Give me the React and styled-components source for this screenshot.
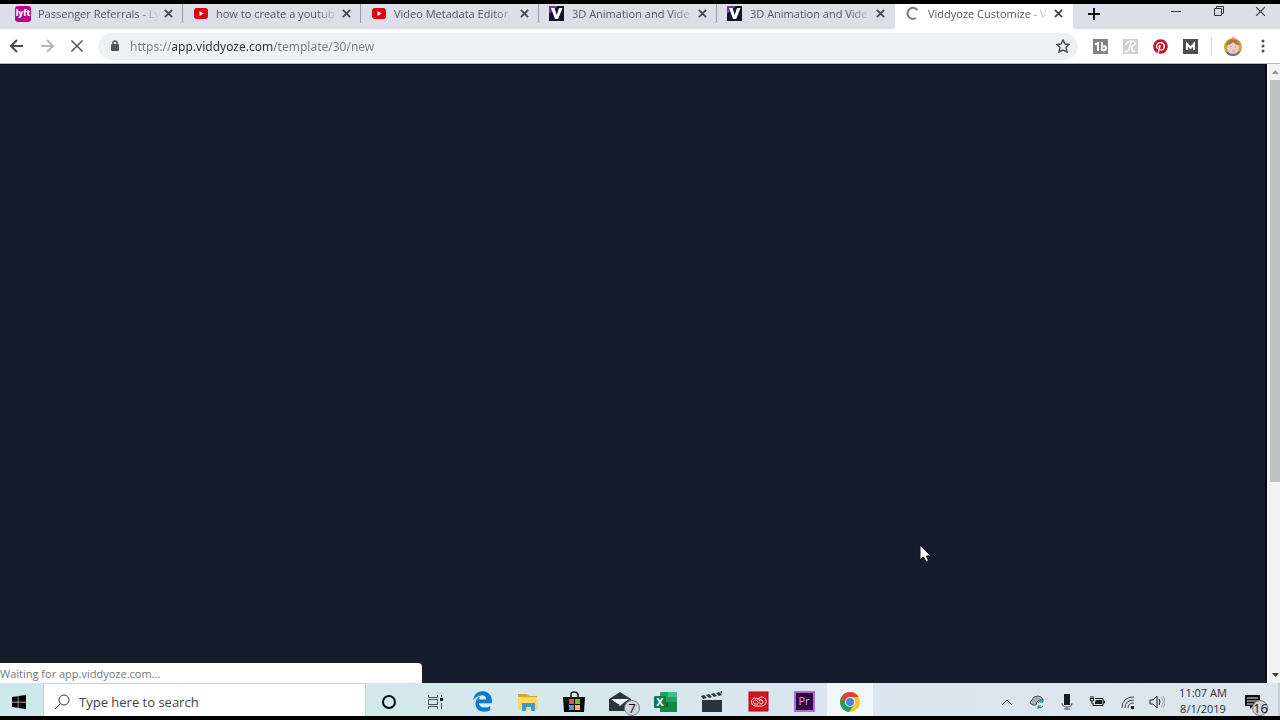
import styled, { createGlobalStyle, css } from "styled-components";
import { FaWindows, FaPinterest, FaEdgeLegacy } from "react-icons/fa6";

const GlobalStyle = createGlobalStyle`
    * {
        box-sizing: border-box;
    }
    body {
        margin: 0;
        font-family: "Open Sans", "Noto Sans", sans-serif;
        font-size: 11px;
    }
    button, input {
        font-family: inherit;
        border: none;
        background: transparent;
        padding: 0;
        outline: none;
    }
    svg {
        display: block;
        flex: none;
    }
`

const Screen = styled.div`
    display: flex;
    flex-direction: column;
    height: 100vh;
    padding: 4px 0;
    background-color: #000;
    overflow: hidden;
`

const TabStrip = styled.header`
    display: flex;
    height: 25px;
    padding-left: 5px;
    background-color: #dcdfe7;
`

const TabList = styled.nav`
    display: flex;
    flex: 0 1 1068px;
    min-width: 0;
`

const Tab = styled.div`
    display: flex;
    flex: 1 1 0;
    min-width: 0;
    align-items: flex-start;
    padding: 2px 9px 0 10px;
    background: linear-gradient(#9a9da5, #9a9da5) right top / 1px 19px no-repeat;
    ${props => props.$last && css`
        background: none;
    `}
    ${props => props.$active && css`
        background: #fff;
    `}
`

const TabLink = styled.a`
    display: flex;
    flex: 1;
    min-width: 0;
    gap: 7px;
    color: #54575d;
    text-decoration: none;
`

const TabTitle = styled.span`
    flex: 1;
    min-width: 0;
    overflow: hidden;
    white-space: nowrap;
    line-height: 15px;
    mask-image: linear-gradient(90deg, #000 calc(100% - 22px), transparent);
`

const TabClose = styled.button`
    display: flex;
    align-items: center;
    justify-content: center;
    width: 12px;
    height: 15px;
    margin-left: 2px;
    color: #45484d;
`

const NewTab = styled.button`
    display: flex;
    align-items: center;
    justify-content: center;
    width: 42px;
    height: 19px;
    color: #111;
`

const WindowControls = styled.div`
    display: flex;
    margin-left: auto;
`

const WindowButton = styled.button`
    display: flex;
    align-items: center;
    justify-content: center;
    width: 43px;
    height: 14px;
    color: #33363b;
    &:last-child {
        width: 40px;
    }
`

const Toolbar = styled.div`
    display: flex;
    align-items: center;
    height: 35px;
    padding: 0 2px;
    background-color: #fff;
    border-bottom: 1px solid #b6b8bb;
`

const ToolButton = styled.button`
    display: flex;
    align-items: center;
    justify-content: center;
    width: 30px;
    height: 28px;
    color: ${props => props.$muted ? "#b5b7ba" : "#4b4e52"};
`

const AddressBar = styled.form`
    display: flex;
    flex: 1;
    align-items: center;
    height: 27px;
    margin: 0 7px 0 6px;
    padding-left: 12px;
    border-radius: 14px;
    background-color: #eef1f3;
`

/* scheme and path are grey, the host between them is dark */
const AddressInput = styled.input`
    flex: 1;
    min-width: 0;
    height: 22px;
    margin-left: 10px;
    font-family: "Noto Sans", sans-serif;
    font-size: 12px;
    color: transparent;
    background-image: linear-gradient(90deg, #7b7f83 42px, #2d3033 42px, #2d3033 143px, #7b7f83 143px);
    background-clip: text;
    -webkit-background-clip: text;
`

const Divider = styled.span`
    width: 1px;
    height: 18px;
    margin: 0 6px 0 6px;
    background-color: #d4d6d9;
`

const Extensions = styled.div`
    display: flex;
    align-items: center;
`

const Viewport = styled.main`
    position: relative;
    display: flex;
    flex: 1;
    min-height: 0;
`

const PageArea = styled.section`
    flex: 1;
    background-color: #151c2b;
    border-top: 1px solid #0c101b;
    border-right: 2px solid #070a12;
`

const Scrollbar = styled.div`
    display: flex;
    flex-direction: column;
    align-items: center;
    width: 13px;
    padding-left: 2px;
    background-color: #f3f3f4;
    border-left: 1px solid #fff;
`

const ScrollArrow = styled.button`
    display: flex;
    align-items: center;
    justify-content: center;
    width: 100%;
    height: 16px;
    color: ${props => props.$muted ? "#96989b" : "#3b3d40"};
`

const ScrollTrack = styled.div`
    flex: 1;
    width: 100%;
`

const ScrollThumb = styled.div`
    height: 68.5%;
    background-color: #c0c1c2;
`

const StatusBubble = styled.output`
    position: absolute;
    left: 0;
    bottom: 0;
    width: 33%;
    height: 20px;
    border-radius: 0 4px 0 0;
    background-color: #fff;
    color: #75787b;
    line-height: 21px;
`

const Pointer = styled.svg`
    position: absolute;
    left: 919px;
    top: 480px;
`

const Taskbar = styled.footer`
    display: flex;
    height: 33px;
    background: linear-gradient(90deg, #cde8ea, #d5e8eb 40%, #dae5ef 65%, #dce6ec);
`

const StartButton = styled.button`
    display: flex;
    align-items: center;
    justify-content: center;
    width: 43px;
    padding: 4px 5px 0 0;
    color: #000;
`

const SearchBox = styled.label`
    display: flex;
    align-items: center;
    gap: 9px;
    width: 323px;
    padding: 4px 10px 0;
    background-color: #fff;
    border: 1px solid #c3d3d6;
    border-bottom: none;
    color: #34373a;
`

const SearchInput = styled.input`
    flex: 1;
    min-width: 0;
    font-size: 13px;
    line-height: 20px;
    &::placeholder {
        color: #3f4346;
        opacity: 1;
    }
`

const ButtonGroup = styled.div`
    display: flex;
    margin-right: 1px;
`

const TaskButton = styled.button`
    position: relative;
    display: flex;
    align-items: center;
    justify-content: center;
    width: 46px;
    padding-top: 4px;
    color: #15191c;
    background-color: ${props => props.$active ? "#f1f7fb" : "transparent"};
`

const Tray = styled.div`
    display: flex;
    margin-left: auto;
    padding-right: 7px;
    border-right: 2px solid #c5ced6;
`

const TrayButton = styled.button`
    position: relative;
    display: flex;
    align-items: center;
    justify-content: center;
    width: ${props => props.$wide ? "37px" : "30px"};
    padding-top: 4px;
    color: #181b1e;
`

const Clock = styled.time`
    display: flex;
    flex-direction: column;
    width: 62px;
    padding-top: 2px;
    text-align: center;
    white-space: nowrap;
    line-height: 16px;
    color: #2c3034;
`

const Badge = styled.span`
    position: absolute;
    right: 3px;
    bottom: 0;
    width: 16px;
    height: 16px;
    border: 1px solid #777b7f;
    border-radius: 50%;
    background-color: #cfd5da;
    color: #101214;
    text-align: center;
    line-height: 14px;
`

function LyftIcon() {
    return (
        <svg width="16" height="16" viewBox="0 0 16 16">
            <rect width="16" height="16" rx="3" fill="#b3078e" />
            <text x="8" y="10" textAnchor="middle" fontSize="8" fontWeight="800" fill="#fff">lyft</text>
        </svg>
    )
}

function YoutubeIcon() {
    return (
        <svg width="16" height="16" viewBox="0 0 16 16">
            <rect x="1" y="2" width="14" height="11" rx="3" fill="#dc0510" />
            <path d="M6.500 5v5l4-2.500z" fill="#fff" />
        </svg>
    )
}

function ViddyozeIcon() {
    return (
        <svg width="16" height="16" viewBox="0 0 16 16">
            <rect width="15" height="15" fill="#14142b" />
            <path d="M0 0h9L0 8z" fill="#6d3f94" />
            <path d="M2 2h3.500l2.200 7 2.300-7h3.500L9.200 13H6z" fill="#fff" />
        </svg>
    )
}

function SpinnerIcon() {
    return (
        <svg width="16" height="16" viewBox="0 0 16 16">
            <path d="M12.500 4.200A5.500 5.500 0 1 0 11 12" fill="none" stroke="#777c85" strokeWidth="2" />
        </svg>
    )
}

function CrossIcon({ size = 9, width = 2 }) {
    return (
        <svg width={size} height={size} viewBox="0 0 10 10">
            <path d="M1 1l8 8M9 1l-8 8" stroke="currentColor" strokeWidth={width} />
        </svg>
    )
}

function ArrowIcon({ flip }) {
    return (
        <svg width="16" height="16" viewBox="0 0 16 16" fill="none" stroke="currentColor" strokeWidth="2">
            <path d={flip ? "M2 8h11M8 2l6 6-6 6" : "M14 8H3M8 2L2 8l6 6"} />
        </svg>
    )
}

function CortanaIcon() {
    return (
        <svg width="18" height="18" viewBox="0 0 18 18">
            <circle cx="9" cy="9" r="6" fill="none" stroke="#080b0d" strokeWidth="2" />
        </svg>
    )
}

function TaskViewIcon() {
    return (
        <svg width="18" height="18" viewBox="0 0 18 18" fill="none" stroke="#4a5256">
            <path d="M2.500 2v2.500h9V2M2.500 16v-2.500h9V16M2.500 6.500h9v5h-9zM15.500 2v2M15.500 10v6" />
            <path d="M14 5h3v3h-3z" fill="#15191c" stroke="none" />
        </svg>
    )
}

function FolderIcon() {
    return (
        <svg width="22" height="20" viewBox="0 0 22 20">
            <path d="M1 2h9l2 2h8v4H1z" fill="#d9a520" />
            <path d="M1 5h19v3h1v10H1z" fill="#fbd668" />
            <path d="M5 19v-8h13v8h-4v-4H9v4z" fill="#3d9acb" />
        </svg>
    )
}

function StoreIcon() {
    return (
        <svg width="22" height="22" viewBox="0 0 22 22">
            <path d="M8 6V3q0-2 3-2t4 2v3" fill="none" stroke="#171717" strokeWidth="1.500" />
            <path d="M0 6h22l-1 15H1z" fill="#080808" />
            <path d="M6 8h5v5H6z" fill="#ee5335" />
            <path d="M12 8h5v5h-5z" fill="#80b733" />
            <path d="M6 14h5v5H6z" fill="#30a6e1" />
            <path d="M12 14h5v5h-5z" fill="#f8bd26" />
        </svg>
    )
}

function MailIcon() {
    return (
        <svg width="24" height="20" viewBox="0 0 24 20">
            <path d="M1 7L12 0l11 7v12H1z" fill="#2d363d" />
            <path d="M3 7h18l-7 5-2 2z" fill="#eef3f6" />
            <path d="M1 7l11 6-5 1z" fill="#2d363d" />
        </svg>
    )
}

function ExcelIcon() {
    return (
        <svg width="24" height="22" viewBox="0 0 24 22">
            <rect x="6" y="1" width="17" height="20" rx="1" fill="#20a366" />
            <path d="M14 1h9v5h-9z" fill="#36c482" />
            <path d="M6 11h8v5H6z" fill="#185c37" />
            <path d="M14 11h9v10H6v-5h8z" fill="#178449" />
            <rect x="0" y="5" width="12" height="12" rx="1" fill="#107c41" />
            <text x="6" y="15" textAnchor="middle" fontSize="11" fontWeight="700" fill="#fff">X</text>
        </svg>
    )
}

function MoviesIcon() {
    return (
        <svg width="24" height="22" viewBox="0 0 24 22" fill="#2b3439">
            <path d="M2 9h20v12H2z" />
            <path d="M1 5l3-1 3 3-4 1zM6 4l3-1 3 3-3 1zM11 3l3-1 3 3-3 1zM16 2l3-1 3 3-3 1zM20 1l2-1v3z" />
        </svg>
    )
}

function CreativeCloudIcon() {
    return (
        <svg width="21" height="21" viewBox="0 0 21 21">
            <rect x="1" y="1" width="19" height="19" fill="#d5111c" stroke="#a90d17" />
            <g fill="none" stroke="#ffe4e2">
                <path d="M7 15h7a4.500 4.500 0 1 0-4-7 4 4 0 1 0-3 7z" />
                <path d="M10 13H7a2 2 0 1 1 2-3l4 3a2 2 0 1 0 0-4q-1 0-2 1" />
                <path d="M9 8q2-1 4 1" />
            </g>
        </svg>
    )
}

function PremiereIcon() {
    return (
        <svg width="21" height="21" viewBox="0 0 21 21">
            <rect x="1" y="1" width="19" height="19" fill="#2d0a3a" stroke="#b268d4" strokeWidth="2" />
            <text x="10" y="14" textAnchor="middle" fontSize="11" fill="#dd9cf4">Pr</text>
        </svg>
    )
}

function ChromeIcon() {
    return (
        <svg width="22" height="22" viewBox="0 0 22 22">
            <circle cx="11" cy="11" r="10" fill="#fbc52c" />
            <path d="M2.300 6A10 10 0 0 0 10 21l5.300-7.500L11 11 6.700 13.500z" fill="#1ca05c" />
            <path d="M11 6h8.700A10 10 0 0 0 2.300 6l4.400 7.500z" fill="#dc4437" />
            <circle cx="11" cy="11" r="5" fill="#f4f4f4" />
            <circle cx="11" cy="11" r="4" fill="#4a86ea" />
        </svg>
    )
}

function TubeBuddyIcon() {
    return (
        <svg width="15" height="15" viewBox="0 0 15 15">
            <rect width="15" height="15" fill="#858585" />
            <path d="M5 3v9M2 5h4M9 3v9M9 8q4-2 4 1t-4 2" fill="none" stroke="#fff" strokeWidth="2" />
        </svg>
    )
}

function ScriptIcon() {
    return (
        <svg width="15" height="15" viewBox="0 0 15 15">
            <rect width="15" height="15" fill="#d0d0d0" />
            <path d="M3 6Q3 3 8 2q5 0 4 3-2 3-5 2 3 1 2 4 0 2 3 1M8 3L5 12q-1 1-3 0" fill="none" stroke="#fff" strokeWidth="1.500" />
        </svg>
    )
}

function MomentumIcon() {
    return (
        <svg width="15" height="15" viewBox="0 0 15 15">
            <rect width="15" height="15" fill="#4c5052" />
            <path d="M4 11V5l3.500 4L11 5v6" fill="none" stroke="#fff" strokeWidth="2" />
        </svg>
    )
}

function AvatarIcon() {
    return (
        <svg width="20" height="20" viewBox="0 0 20 20">
            <circle cx="10" cy="11" r="9" fill="#cda447" />
            <path d="M2 15q8 3 16 0-3 5-8 5t-8-5z" fill="#86609c" />
            <ellipse cx="10" cy="12" rx="6" ry="6" fill="#f2c9bd" />
            <path d="M3 9q2-7 8-6 5 1 6 6-5 0-7-3-2 3-7 3z" fill="#a97a38" />
            <path d="M8 3l3-3 1 4z" fill="#dd8d9b" />
            <path d="M7 11h1M12 11h1M9 15h3" stroke="#c99083" fill="none" />
        </svg>
    )
}

const tabs = [
    { title: "Passenger Referrals - Ly", icon: <LyftIcon /> },
    { title: "how to create a youtub", icon: <YoutubeIcon /> },
    { title: "Video Metadata Editor", icon: <YoutubeIcon /> },
    { title: "3D Animation and Vide", icon: <ViddyozeIcon /> },
    { title: "3D Animation and Vide", icon: <ViddyozeIcon />, last: true },
    { title: "Viddyoze Customize - V", icon: <SpinnerIcon />, active: true },
]

const apps = [
    { name: "Edge", icon: <FaEdgeLegacy size={21} color="#087bcc" /> },
    { name: "File Explorer", icon: <FolderIcon /> },
    { name: "Store", icon: <StoreIcon /> },
    { name: "Mail", icon: <MailIcon />, badge: 7 },
    { name: "Excel", icon: <ExcelIcon /> },
    { name: "Movies & TV", icon: <MoviesIcon /> },
    { name: "Creative Cloud", icon: <CreativeCloudIcon /> },
    { name: "Premiere Pro", icon: <PremiereIcon /> },
    { name: "Chrome", icon: <ChromeIcon />, active: true },
]

const trayIcons = [
    { name: "Show hidden icons", icon: <path d="M3 11l5-5 5 5" /> },
    {
        name: "OneDrive",
        icon: <>
            <path d="M4 11q-5-2-1-5 1-4 6-4 4 0 5 4-6-1-7 5z" fill="#a9aeae" stroke="#4b5254" />
            <path d="M9 9q2-4 5-1M14 5v3h-3M14 12q-2 3-5 1M9 15v-3h3" stroke="#087e96" />
        </>
    },
    {
        name: "Microphone",
        icon: <>
            <rect x="5" y="0" width="6" height="11" fill="currentColor" stroke="none" />
            <path d="M3 9q0 4 5 4t5-4M8 13v3M5 15h6" stroke="#5a6064" />
        </>
    },
    {
        name: "Battery",
        icon: <>
            <path d="M6 4.500h8v7H4V9M14 7h1.500v2H14" />
            <path d="M7 6h6v4H6V8z" fill="currentColor" stroke="none" />
            <path d="M1 4.500h4M1.500 5v2h3V5M2 2v2M4 2v2M3 7v3" />
        </>
    },
    {
        name: "Network",
        icon: <>
            <path d="M3 14Q3 3 15 3M6 14q0-8 9-8M9 14q0-5 6-5" stroke="#3c4246" />
            <path d="M12 12h3v3h-3z" fill="currentColor" stroke="none" />
        </>
    },
    {
        name: "Volume",
        icon: <>
            <path d="M1 6h3l4-4v12l-4-4H1z" />
            <path d="M10 5q2 3 0 6" />
            <path d="M12 3q4 5 0 10M14 2q4 6 0 12" stroke="#9ba2a7" />
        </>
    },
]

export default function App() {
    return (
        <Screen>
            <GlobalStyle />
            <TabStrip>
                <TabList>
                    {tabs.map((tab, i) => (
                        <Tab key={i} $active={tab.active} $last={tab.last}>
                            <TabLink href="#">
                                {tab.icon}
                                <TabTitle>{tab.title}</TabTitle>
                            </TabLink>
                            <TabClose aria-label="Close tab"><CrossIcon /></TabClose>
                        </Tab>
                    ))}
                </TabList>
                <NewTab aria-label="New tab">
                    <svg width="12" height="12" viewBox="0 0 12 12">
                        <path d="M6 0v12M0 6h12" stroke="currentColor" strokeWidth="2" />
                    </svg>
                </NewTab>
                <WindowControls>
                    <WindowButton aria-label="Minimize">
                        <svg width="10" height="10" viewBox="0 0 10 10"><path d="M0 5.500h10" stroke="currentColor" /></svg>
                    </WindowButton>
                    <WindowButton aria-label="Restore">
                        <svg width="10" height="10" viewBox="0 0 10 10" fill="none" stroke="currentColor">
                            <path d="M.5 2.500h7v7h-7zM2.500 2V.5h7v7H8" />
                        </svg>
                    </WindowButton>
                    <WindowButton aria-label="Close"><CrossIcon size={11} width={1} /></WindowButton>
                </WindowControls>
            </TabStrip>

            <Toolbar>
                <ToolButton aria-label="Back"><ArrowIcon /></ToolButton>
                <ToolButton aria-label="Forward" $muted><ArrowIcon flip /></ToolButton>
                <ToolButton aria-label="Stop"><CrossIcon size={14} width={1} /></ToolButton>
                <AddressBar>
                    <svg width="10" height="12" viewBox="0 0 10 12">
                        <rect x="1" y="4" width="8" height="7" rx="1" fill="#505459" />
                        <path d="M3 5V3a2 2 0 0 1 4 0v2" fill="none" stroke="#505459" strokeWidth="1.500" />
                    </svg>
                    <AddressInput aria-label="Address" defaultValue="https://app.viddyoze.com/template/30/new" />
                    <ToolButton type="button" aria-label="Bookmark">
                        <svg width="14" height="14" viewBox="0 0 14 14">
                            <path d="M7 1l2 4 4 .5-3 3 1 4.500-4-2-4 2 1-4.500-3-3L5 5z" fill="none" stroke="currentColor" strokeWidth="1.500" />
                        </svg>
                    </ToolButton>
                </AddressBar>
                <Extensions>
                    <ToolButton aria-label="TubeBuddy"><TubeBuddyIcon /></ToolButton>
                    <ToolButton aria-label="Rebrandly"><ScriptIcon /></ToolButton>
                    <ToolButton aria-label="Pinterest"><FaPinterest size={15} color="#c70e27" /></ToolButton>
                    <ToolButton aria-label="Momentum"><MomentumIcon /></ToolButton>
                    <Divider />
                    <ToolButton aria-label="Profile"><AvatarIcon /></ToolButton>
                    <ToolButton aria-label="Menu">
                        <svg width="4" height="14" viewBox="0 0 4 14" fill="currentColor">
                            <circle cx="2" cy="2" r="1.500" />
                            <circle cx="2" cy="7" r="1.500" />
                            <circle cx="2" cy="12" r="1.500" />
                        </svg>
                    </ToolButton>
                </Extensions>
            </Toolbar>

            <Viewport>
                <PageArea />
                <Scrollbar>
                    <ScrollArrow aria-label="Scroll up" $muted>
                        <svg width="7" height="4" viewBox="0 0 7 4"><path d="M0 4l3.500-4L7 4z" fill="currentColor" /></svg>
                    </ScrollArrow>
                    <ScrollTrack><ScrollThumb /></ScrollTrack>
                    <ScrollArrow aria-label="Scroll down">
                        <svg width="7" height="4" viewBox="0 0 7 4"><path d="M0 0l3.500 4L7 0z" fill="currentColor" /></svg>
                    </ScrollArrow>
                </Scrollbar>
                <StatusBubble>Waiting for app.viddyoze.com...</StatusBubble>
                <Pointer width="13" height="20" viewBox="0 0 13 20">
                    <path d="M1 1v15l3.500-3 2.500 5 2.500-1-2-5H12z" fill="#f8f9fb" stroke="#11151f" />
                </Pointer>
            </Viewport>

            <Taskbar>
                <StartButton aria-label="Start"><FaWindows size={16} /></StartButton>
                <SearchBox>
                    <svg width="16" height="16" viewBox="0 0 16 16" fill="none" stroke="currentColor">
                        <circle cx="10" cy="6" r="5" />
                        <path d="M6.500 9.500L1 15" />
                    </svg>
                    <SearchInput aria-label="Search" placeholder="Type here to search" />
                </SearchBox>
                <ButtonGroup>
                    <TaskButton aria-label="Cortana"><CortanaIcon /></TaskButton>
                    <TaskButton aria-label="Task View"><TaskViewIcon /></TaskButton>
                </ButtonGroup>
                <ButtonGroup>
                    {apps.map(app => (
                        <TaskButton key={app.name} aria-label={app.name} $active={app.active}>
                            {app.icon}
                            {app.badge && <Badge>{app.badge}</Badge>}
                        </TaskButton>
                    ))}
                </ButtonGroup>
                <Tray>
                    {trayIcons.map(item => (
                        <TrayButton key={item.name} aria-label={item.name}>
                            <svg width="16" height="16" viewBox="0 0 16 16" fill="none" stroke="currentColor">{item.icon}</svg>
                        </TrayButton>
                    ))}
                    <Clock>
                        <span>11:07 AM</span>
                        <span>8/1/2019</span>
                    </Clock>
                    <TrayButton aria-label="Notifications" $wide>
                        <svg width="16" height="18" viewBox="0 0 16 18">
                            <path d="M0 2h15v11H8l-3 3v-3H0z" fill="#0b0d0f" />
                            <path d="M2 5h11M2 8h11M2 11h6" stroke="#dce6ec" />
                        </svg>
                        <Badge>16</Badge>
                    </TrayButton>
                </Tray>
            </Taskbar>
        </Screen>
    )
}
